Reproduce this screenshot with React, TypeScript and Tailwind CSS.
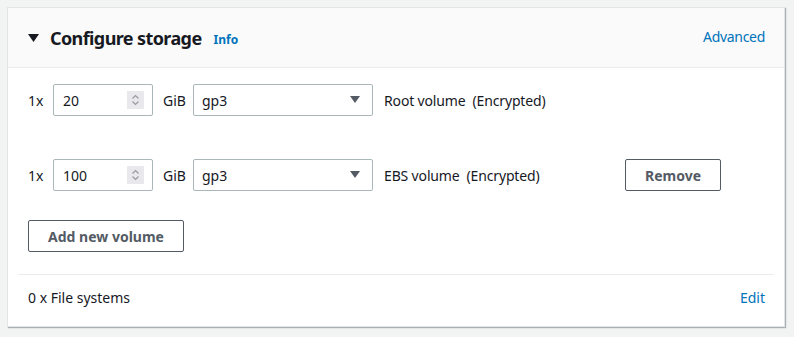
import React from "react";

function Spinner() {
  return (
    <div className="flex h-[18px] w-[17px] flex-col items-center justify-center bg-[#e9e9ed]">
      <svg width="9" height="12" viewBox="0 0 9 12" fill="none" stroke="#9a9aa0" strokeWidth="1.2">
        <path d="M1.5 4.5 L4.5 1.5 L7.5 4.5" />
        <path d="M1.5 7.5 L4.5 10.5 L7.5 7.5" />
      </svg>
    </div>
  );
}

function VolumeRow({ size, label, removable }: { size: string; label: string; removable?: boolean }) {
  return (
    <div className="flex h-[32px] items-center">
      <span className="w-[25px] text-[14px]">1x</span>
      <div className="flex h-[32px] w-[100px] items-center justify-between rounded-[2px] border border-[#aab7b8] pl-[9px] pr-[8px]">
        <span className="text-[14px]">{size}</span>
        <Spinner />
      </div>
      <span className="ml-[10px] w-[30px] text-[14px]">GiB</span>
      <div className="flex h-[32px] w-[180px] items-center justify-between rounded-[2px] border border-[#aab7b8] pl-[8px] pr-[12px]">
        <span className="text-[14px]">gp3</span>
        <svg width="10" height="8" viewBox="0 0 10 8">
          <path d="M0 0 H10 L5 7 Z" fill="#545b64" />
        </svg>
      </div>
      <span className="ml-[11px] w-[241px] whitespace-pre text-[14px] tracking-[-0.15px]">{label}  (Encrypted)</span>
      {removable && (
        <button className="flex h-[32px] w-[96px] items-center justify-center rounded-[2px] border border-[#545b64] text-[14px] font-bold text-[#545b64]">
          Remove
        </button>
      )}
    </div>
  );
}

export default function App() {
  return (
    <div
      className="h-[337px] w-[794px] bg-[#f2f3f3] pl-[7px] pt-[7px] text-[#16191f]"
      style={{ fontFamily: '"Noto Sans", "Open Sans", sans-serif' }}
    >
      <div className="flex h-[320px] w-[778px] flex-col border border-[#e3e5e5] bg-white shadow-[1px_1px_1px_0_rgba(0,28,36,0.3)]">
        <div className="flex h-[60px] items-center justify-between border-b border-[#eaeded] bg-[#fafafa] pl-[20px] pr-[19px]">
          <div className="flex items-center">
            <svg width="11" height="8" viewBox="0 0 11 8" className="mr-[11px]">
              <path d="M0 0 H11 L5.5 8 Z" fill="#16191f" />
            </svg>
            <span className="text-[18px] font-bold leading-none tracking-[-0.6px]">Configure storage</span>
            <span className="ml-[12px] mt-[4px] text-[12px] font-bold text-[#0073bb]">Info</span>
          </div>
          <span className="mb-[2px] text-[14px] tracking-[-0.3px] text-[#0073bb]">Advanced</span>
        </div>
        <div className="flex flex-col px-[20px] pt-[16px]">
          <VolumeRow size="20" label="Root volume" />
          <div className="mt-[43px]">
            <VolumeRow size="100" label="EBS volume" removable />
          </div>
          <button className="mt-[29px] flex h-[32px] w-[156px] items-center justify-center rounded-[2px] border border-[#545b64] text-[14px] font-bold text-[#545b64]">
            Add new volume
          </button>
        </div>
        <div className="mx-[10px] mt-[22px] border-t border-[#eaeded]" />
        <div className="flex flex-1 items-center justify-between pb-[6px] pl-[20px] pr-[19px]">
          <span className="text-[14px]">0 x File systems</span>
          <span className="text-[14px] text-[#0073bb]">Edit</span>
        </div>
      </div>
    </div>
  );
}
